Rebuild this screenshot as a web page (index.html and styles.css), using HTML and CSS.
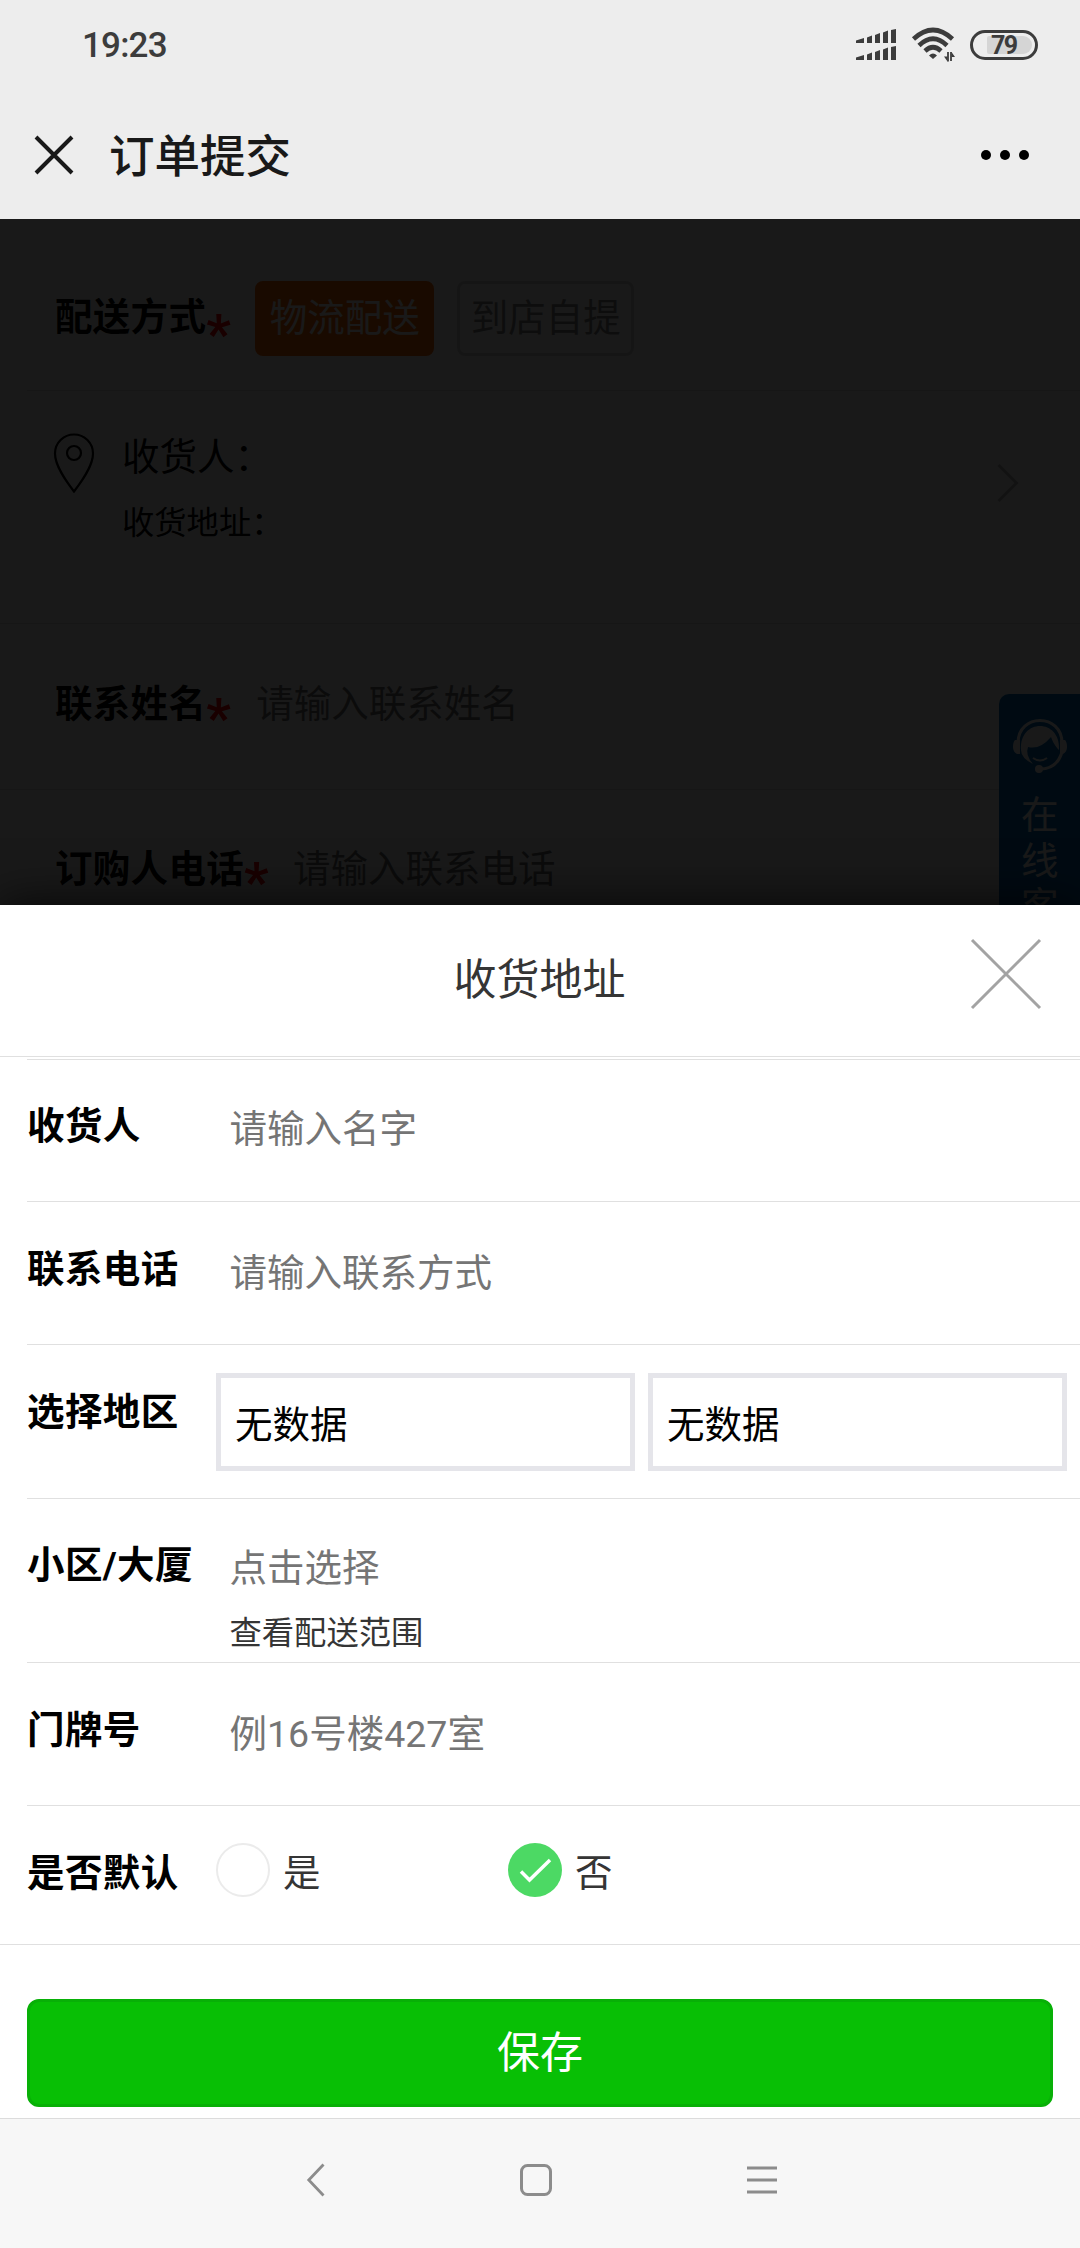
FILE: index.html
```html
<!DOCTYPE html>
<html lang="zh-CN">
<head>
<meta charset="utf-8">
<title>订单提交</title>
<link rel="stylesheet" href="styles.css">
</head>
<body>
<div class="screen">
  <header class="top">
    <div class="status">
      <span class="time">19:23</span>
      <div class="status-icons">
        <svg class="signal" width="40" height="32" viewBox="0 0 40 32" fill="#3c3c3c">
          <path d="M0 11.500l8-2.500v5H0zM11 8.500l5-2V14h-5zM19 6l5-2v10h-5zM27 3.500l5-2V14h-5zM35 1l5-1v14h-5z"/>
          <path d="M0 28.500l8-2.500v5H0zM11 25.500l5-2V31h-5zM19 23l5-2v10h-5zM27 20.500l5-2V31h-5zM35 18l5-1v14h-5z"/>
        </svg>
        <svg class="wifi" width="44" height="34" viewBox="0 0 44 34" fill="none" stroke="#3c3c3c" stroke-width="4.600">
          <path d="M1.500 11Q21 -7 40.500 11M7 17.500Q21 4 35 17.500M13 23Q21 15.500 29 23"/>
          <path d="M17 27.500Q21 23.500 25 27.500L21 31z" fill="#3c3c3c" stroke="none"/>
          <path d="M36 24v9.500M39 33v-9" stroke-width="1.800"/>
          <path d="M32 28.500h3.500v5zM39.500 24v5H43z" fill="#3c3c3c" stroke="none"/>
        </svg>
        <div class="battery"><span class="battery-level">79</span></div>
      </div>
    </div>
    <div class="titlebar">
      <svg width="38" height="38" viewBox="0 0 38 38" stroke="#191919" stroke-width="4"><path d="M1 1l36 36M37 1L1 37"/></svg>
      <h1 class="page-title">订单提交</h1>
      <svg class="more" width="50" height="12" viewBox="0 0 50 12"><circle cx="6" cy="6" r="5"/><circle cx="25" cy="6" r="5"/><circle cx="44" cy="6" r="5"/></svg>
    </div>
  </header>

  <main class="page">
    <section class="line delivery">
      <span class="name">配送方式</span><span class="star">*</span>
      <span class="option option-on">物流配送</span>
      <span class="option">到店自提</span>
    </section>
    <section class="receiver">
      <svg class="pin" width="42" height="62" viewBox="0 0 42 62" fill="none" stroke="#000" stroke-width="2.200"><path d="M21 59.500C13 49 2 34 2 21.500a19 19 0 0 1 38 0C40 34 29 49 21 59.500z"/><circle cx="21" cy="21" r="7"/></svg>
      <div class="receiver-text">
        <div class="receiver-name">收货人：</div>
        <div class="receiver-address">收货地址：</div>
      </div>
      <svg class="go" width="22" height="40" viewBox="0 0 22 40" fill="none" stroke="#b5b5ba" stroke-width="3"><path d="M1.500 2l18 18-18 18"/></svg>
    </section>
    <section class="line contact">
      <span class="name">联系姓名</span><span class="star">*</span><span class="hint">请输入联系姓名</span>
    </section>
    <section class="line phone">
      <span class="name">订购人电话</span><span class="star">*</span><span class="hint">请输入联系电话</span>
    </section>
    <aside class="service">
      <svg width="54" height="56" viewBox="0 0 54 56" fill="none" stroke="#fff" stroke-width="3">
        <path d="M5 25C5-5 49-5 49 25M49 34Q44 51 27 51"/>
        <path d="M2 22h5v14H4q-4-2-4-7t2-7zM52 22h-5v14h3q4-2 4-7t-2-7z" fill="#fff" stroke="none"/>
        <path d="M8 32C6 0 48 0 46 32C44 30 41 27 38 19Q27 32 15 29Q12 37 20 46Q8 40 8 32z" fill="#fff" stroke="none"/>
        <path d="M20 40q7 5 14 0" stroke-width="2"/><circle cx="26" cy="51" r="4" fill="#fff" stroke="none"/>
      </svg>
      <span class="service-text">在线客服</span>
    </aside>
    <div class="mask"></div>
  </main>

  <section class="sheet">
    <div class="sheet-head">
      <h2 class="sheet-title">收货地址</h2>
      <svg class="sheet-close" width="70" height="70" viewBox="0 0 70 70" stroke="#a3a3a3" stroke-width="3"><path d="M1 1l68 68M69 1L1 69"/></svg>
    </div>
    <div class="form">
      <div class="row row-first"><label class="label">收货人</label><div class="field">请输入名字</div></div>
      <div class="row"><label class="label">联系电话</label><div class="field">请输入联系方式</div></div>
      <div class="row row-region"><label class="label">选择地区</label><div class="selects"><div class="select">无数据</div><div class="select">无数据</div></div></div>
      <div class="row row-estate"><label class="label">小区/大厦</label><div class="field">点击选择<div class="range">查看配送范围</div></div></div>
      <div class="row"><label class="label">门牌号</label><div class="field">例16号楼427室</div></div>
      <div class="row row-default">
        <label class="label">是否默认</label>
        <div class="radios">
          <div class="radio"><span class="dot"></span><span>是</span></div>
          <div class="radio"><span class="dot dot-on"><svg width="34" height="28" viewBox="0 0 34 28" fill="none" stroke="#fff" stroke-width="3.500"><path d="M3 15.500l8.500 8.500L32 4"/></svg></span><span>否</span></div>
        </div>
      </div>
    </div>
    <div class="actions"><button class="save">保存</button></div>
  </section>

  <nav class="nav">
    <svg width="18" height="34" viewBox="0 0 18 34" fill="none" stroke="#8c8c8c" stroke-width="2.800"><path d="M16.500 1.500L1.800 17l14.700 15.500"/></svg>
    <svg width="32" height="32" viewBox="0 0 32 32" fill="none" stroke="#8c8c8c" stroke-width="3"><rect x="1.500" y="1.500" width="29" height="29" rx="6"/></svg>
    <svg width="30" height="28" viewBox="0 0 30 28" stroke="#8c8c8c" stroke-width="2.800"><path d="M0 2h30M0 14h30M0 26h30"/></svg>
  </nav>
</div>
</body>
</html>
```
FILE: styles.css
```css
* { box-sizing: border-box; }
body {
  margin: 0;
  background: #fff;
  font-family: Roboto, "Noto Sans CJK SC", sans-serif;
  font-size: 37.5px;
  line-height: 54px;
  color: #000;
}
svg { display: block; flex: none; overflow: visible; }
h1, h2 { margin: 0; font-weight: 400; }
.screen {
  width: 1080px;
  height: 2248px;
  display: flex;
  flex-direction: column;
  overflow: hidden;
}

/* status bar and title */
.top { height: 219px; flex: none; background: #ededed; }
.status {
  height: 90px;
  padding: 0 42px 0 82px;
  display: flex;
  justify-content: space-between;
  align-items: center;
}
.time { padding-top: 2px; font-size: 35px; font-weight: 500; letter-spacing: -.8px; color: #3c3c3c; }
.status-icons { display: flex; align-items: center; gap: 16px; }
.wifi { margin-right: -2px; }
.battery {
  width: 68px;
  height: 30px;
  padding: 3px;
  border: 3px solid #3c3c3c;
  border-radius: 15px;
}
.battery-level {
  display: block;
  width: 45px;
  height: 18px;
  margin-left: 11px;
  padding-left: 4px;
  border-radius: 2px 9px 9px 2px;
  background: #d5d5d5;
  font-size: 25px;
  line-height: 19px;
  font-weight: 700;
  letter-spacing: -1.500px;
  color: #3c3c3c;
}
.titlebar { height: 129px; padding: 0 50px 0 35px; display: flex; align-items: center; }
.page-title { margin: 6px 0 0 36px; font-size: 45.5px; line-height: 60px; font-weight: 500; color: #191919; }
.more { margin-left: auto; }

/* order page under the mask */
.page {
  position: relative;
  height: 686px;
  flex: none;
  display: flex;
  flex-direction: column;
  background: #fff;
  overflow: hidden;
}
.mask { position: absolute; inset: 0; background: rgba(0, 0, 0, .9); }
.line { display: flex; padding-left: 55px; flex: none; }
.name { font-weight: 700; letter-spacing: .3px; }
.star { width: 24px; font-size: 54px; font-weight: 700; color: #f00; }
.delivery { height: 171px; padding-top: 62px; }
.delivery .name { padding-top: 9px; }
.delivery .star { padding-top: 26px; margin-right: 25px; }
.option {
  width: 177px;
  height: 75px;
  margin-right: 25px;
  padding-top: 7px;
  border: 3px solid #d8d8d8;
  border-radius: 8px;
  text-align: center;
  color: #888;
}
.option-on { width: 179px; margin-right: 23px; border-color: #f60; background: #f60; color: #fff; }
.receiver {
  height: 206px;
  flex: none;
  margin-left: 27px;
  padding: 41px 61px 0 26px;
  display: flex;
  border-top: 1px solid #ddd;
}
.receiver-text { flex: 1; padding: 0 0 0 27px; }
.receiver-name { margin-top: -2px; }
.receiver-address { margin-top: 16px; font-size: 32.300px; line-height: 46px; }
.go { margin-top: 31px; }
.contact {
  height: 167px;
  margin-top: 27px;
  padding-top: 53px;
  border-top: 1px solid #ddd;
  border-bottom: 1px solid #ddd;
}
.contact .star { padding-top: 14px; margin-right: 26px; }
.phone { padding-top: 52px; height: 115px; }
.phone .star { padding-top: 13px; margin-right: 25px; }
.hint { color: #757575; }
.service {
  position: absolute;
  top: 475px;
  right: 0;
  width: 81px;
  height: 260px;
  padding-top: 24px;
  display: flex;
  flex-direction: column;
  align-items: center;
  border-radius: 10px 0 0 10px;
  background: #006cb8;
  color: #fff;
}
.service-text { width: 37px; margin-top: 19px; line-height: 45.500px; }

/* address sheet */
.sheet {
  position: relative;
  height: 1213px;
  flex: none;
  background: #fff;
  box-shadow: 0 0 45px rgba(0, 0, 0, .8);
}
.sheet-head {
  height: 152px;
  padding: 0 39px 0 108px;
  display: flex;
  border-bottom: 1px solid #e0e0e0;
}
.sheet-title { flex: 1; padding-top: 45px; font-size: 43px; line-height: 60px; text-align: center; color: #353535; }
.sheet-close { margin-top: 34px; }
.form { padding-top: 2px; border-bottom: 1px solid #e0e0e0; }
.row { height: 143px; margin-left: 27px; display: flex; border-top: 1px solid #e0e0e0; }
.row-first { height: 142px; }
.row-region { height: 154px; }
.row-estate { height: 164px; }
.row-default { height: 139px; }
.label { width: 189px; padding-top: 40px; font-weight: 700; letter-spacing: .4px; white-space: nowrap; }
.field { padding: 44px 0 0 13.500px; color: #757575; }
.row-first .label, .row-estate .label { padding-top: 39px; }
.row-first .field, .row-estate .field { padding-top: 42px; }
.range { margin-top: 15px; font-size: 32.300px; line-height: 46px; color: #353535; }
.selects { flex: 1; padding: 28px 13px 0 0; display: flex; gap: 13px; }
.select { flex: 1; height: 98px; padding: 20px 14px 0; border: 5px solid #e5e5ea; }
.radios { display: flex; padding-top: 37px; color: #353535; }
.radio { width: 292px; display: flex; gap: 13px; line-height: 60px; }
.dot {
  width: 54px;
  height: 54px;
  display: flex;
  align-items: center;
  justify-content: center;
  border: 2px solid #ebebeb;
  border-radius: 50%;
}
.dot-on { border: 0; background: #4cd964; }
.actions { padding: 54px 27px 0; }
.save {
  display: block;
  width: 100%;
  height: 108px;
  padding: 0 0 8px;
  border: 3px solid #08b007;
  border-radius: 12px;
  background: #08bf05;
  font-family: inherit;
  font-size: 43px;
  color: #fff;
}

/* system navigation */
.nav {
  position: relative;
  flex: 1;
  padding: 0 303px 7px 307px;
  display: flex;
  justify-content: space-between;
  align-items: center;
  border-top: 1px solid #dcdcdc;
  background: #f7f7f7;
}
```
